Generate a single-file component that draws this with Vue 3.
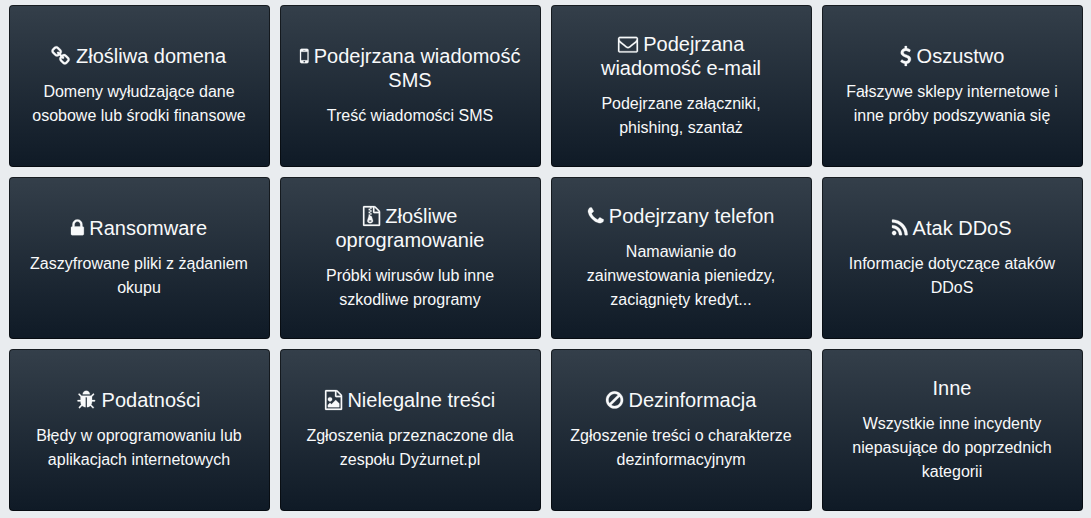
<template>
  <div class="grid">
    <a v-for="card in cards" :key="card.title" class="card" href="#">
      <div class="title">
        <svg
          v-if="card.icon"
          class="icon"
          :viewBox="`${icons[card.icon].x} 0 ${icons[card.icon].adv} 1792`"
          :style="{ width: (icons[card.icon].adv / 1792) * 20 + 'px' }"
        >
          <path :d="icons[card.icon].d" />
        </svg>
        {{ card.title }}
      </div>
      <p class="desc">{{ card.desc }}</p>
    </a>
  </div>
</template>

<script setup>
// Font Awesome 4 glyphs on the 1792 grid, x/adv crop each one to its advance width
const icons = {
  link: { x: 64, adv: 1664, d: 'M1456 1216q0-40-28-68l-208-208q-28-28-68-28-42 0-72 32 3 3 19 18.500t21.500 21.500 15 19 13 25.500 3.500 27.500q0 40-28 68t-68 28q-15 0-27.500-3.500t-25.500-13-19-15-21.500-21.500-18.500-19q-33 31-33 73 0 40 28 68l206 207q27 27 68 27 40 0 68-26l147-146q28-28 28-67zm-703-705q0-40-28-68l-206-207q-28-28-68-28-39 0-68 27l-147 146q-28 28-28 67 0 40 28 68l208 208q27 27 68 27 42 0 72-31-3-3-19-18.500t-21.500-21.500-15-19-13-25.500-3.500-27.500q0-40 28-68t68-28q15 0 27.500 3.500t25.500 13 19 15 21.500 21.500 18.500 19q33-31 33-73zm895 705q0 120-85 203l-147 146q-83 83-203 83-121 0-204-85l-206-207q-83-83-83-203 0-123 88-209l-88-88q-86 88-208 88-120 0-204-84l-208-208q-84-84-84-204t85-203l147-146q83-83 203-83 121 0 204 85l206 207q83 83 83 203 0 123-88 209l88 88q86-88 208-88 120 0 204 84l208 208q84 84 84 204z' },
  mobile: { x: 512, adv: 768, d: 'M976 1408q0-33-23.500-56.500t-56.500-23.500-56.500 23.500-23.500 56.500 23.500 56.500 56.500 23.500 56.500-23.500 23.500-56.500zm208-160v-704q0-13-9.500-22.500t-22.500-9.500h-512q-13 0-22.500 9.500t-9.500 22.500v704q0 13 9.500 22.500t22.500 9.500h512q13 0 22.500-9.500t9.500-22.500zm-192-848q0-16-16-16h-160q-16 0-16 16t16 16h160q16 0 16-16zm288-16v1024q0 52-38 90t-90 38h-512q-52 0-90-38t-38-90v-1024q0-52 38-90t90-38h512q52 0 90 38t38 90z' },
  envelope: { x: 0, adv: 1792, d: 'M1664 1504v-768q-32 36-69 66-268 206-426 338-51 43-83 67t-86.500 48.500-102.500 24.500h-2q-48 0-102.500-24.500t-86.500-48.500-83-67q-158-132-426-338-37-30-69-66v768q0 13 9.500 22.500t22.500 9.500h1472q13 0 22.500-9.500t9.500-22.500zm0-1051v-24.500l-.5-13-3-12.500-5.500-9-9-7.500-14-2.500h-1472q-13 0-22.500 9.500t-9.500 22.500q0 168 147 284 193 152 401 317 6 5 35 29.500t46 37.500 44.500 31.500 50.500 27.500 43 9h2q20 0 43-9t50.500-27.500 44.500-31.500 46-37.500 35-29.500q208-165 401-317 54-43 100.500-115.500t46.500-131.500zm128-37v1088q0 66-47 113t-113 47h-1472q-66 0-113-47t-47-113v-1088q0-66 47-113t113-47h1472q66 0 113 47t47 113z' },
  dollar: { x: 384, adv: 1024, d: 'M1362 1185q0 153-99.500 263.500t-258.500 136.500v175q0 14-9 23t-23 9h-135q-13 0-22.500-9.500t-9.500-22.500v-175q-66-9-127.500-31t-101.500-44.500-74-48-46.500-37.500-17.500-18q-17-21-2-41l103-135q7-10 23-12 15-2 24 9l2 2q113 99 243 125 37 8 74 8 81 0 142.500-43t61.500-122q0-28-15-53t-33.500-42-58.500-37.500-66-32-80-32.500q-39-16-61.500-25t-61.500-26.500-62.500-31-56.500-35.500-53.500-42.500-43.500-49-35.500-58-21-66.500-8.500-78q0-138 98-242t255-134v-180q0-13 9.500-22.500t22.500-9.500h135q14 0 23 9t9 23v176q57 6 110.500 23t87 33.500 63.500 37.500 39 29 15 14q17 18 5 38l-81 146q-8 15-23 16-14 3-27-7-3-3-14.500-12t-39-26.500-58.500-32-74.500-26-85.500-11.500q-95 0-155 43t-60 111q0 26 8.500 48t29.500 41.500 39.500 33 56 31 60.500 27 70 27.500q53 20 81 31.500t76 35 75.500 42.500 62 50 53 63.500 31.500 76.500 13 94z' },
  lock: { x: 320, adv: 1152, d: 'M640 768h512v-192q0-106-75-181t-181-75-181 75-75 181v192zm832 96v576q0 40-28 68t-68 28h-960q-40 0-68-28t-28-68v-576q0-40 28-68t68-28h32v-192q0-184 132-316t316-132 316 132 132 316v192h32q40 0 68 28t28 68z' },
  fileArchive: { x: 128, adv: 1536, d: 'M768 384v-128h-128v128h128zm128 128v-128h-128v128h128zm-128 128v-128h-128v128h128zm128 128v-128h-128v128h128zm700-388q28 28 48 76t20 88v1152q0 40-28 68t-68 28h-1344q-40 0-68-28t-28-68v-1600q0-40 28-68t68-28h896q40 0 88 20t76 48zm-444-244v376h376q-10-29-22-41l-313-313q-12-12-41-22zm384 1528v-1024h-416q-40 0-68-28t-28-68v-416h-128v128h-128v-128h-512v1536h1280zm-627-721l107 349q8 27 8 52 0 83-72.500 137.500t-183.500 54.500-183.500-54.500-72.500-137.500q0-25 8-52 21-63 120-396v-128h128v128h79q22 0 39 13t23 34zm-141 465q53 0 90.500-19t37.500-45-37.500-45-90.500-19-90.500 19-37.500 45 37.500 45 90.500 19z' },
  phone: { x: 192, adv: 1408, d: 'M1600 1240q0 27-10 70.500t-21 68.500q-21 50-122 106-94 51-186 51-27 0-53-3.500t-57.500-12.500-47-14.500-55.500-20.500-49-18q-98-35-175-83-127-79-264-216t-216-264q-48-77-83-175-3-9-18-49t-20.500-55.500-14.500-47-12.500-57.500-3.500-53q0-92 51-186 56-101 106-122 25-11 68.500-21t70.500-10q14 0 21 3 18 6 53 76 11 19 30 54t35 63.500 31 53.500q3 4 17.500 25t21.500 35.500 7 28.500q0 20-28.500 50t-62 55-62 53-28.500 46q0 9 5 22.500t8.500 20.500 14 24 11.500 19q76 137 174 235t235 174q2 1 19 11.500t24 14 20.500 8.500 22.500 5q18 0 46-28.500t53-62 55-62 50-28.500q14 0 28.500 7t35.500 21.500 25 17.500q25 15 53.500 31t63.500 35 54 30q70 35 76 53 3 7 3 21z' },
  rss: { x: 192, adv: 1408, d: 'M576 1344q0 80-56 136t-136 56-136-56-56-136 56-136 136-56 136 56 56 136zm512 123q2 28-17 48-18 21-47 21h-135q-25 0-43-16.500t-20-41.500q-22-229-184.500-391.500t-391.500-184.500q-25-2-41.500-20t-16.500-43v-135q0-29 21-47 17-17 43-17h5q160 13 306 80.500t259 181.500q114 113 181.500 259t80.500 306zm512 2q2 27-18 47-18 20-46 20h-143q-26 0-44.500-17.500t-19.500-42.500q-12-215-101-408.500t-231.500-336-336-231.500-408.500-102q-25-1-42.500-19.500t-17.500-43.500v-143q0-28 20-46 18-18 44-18h3q262 13 501.500 120t425.500 294q187 186 294 425.500t120 501.500z' },
  bug: { x: 64, adv: 1664, d: 'M1696 960q0 26-19 45t-45 19h-224q0 171-67 290l208 209q19 19 19 45t-19 45q-18 19-45 19t-45-19l-198-197q-5 5-15 13t-42 28.500-65 36.500-82 29-97 13v-896h-128v896q-51 0-101.500-13.500t-87-33-66-39-43.500-32.500l-15-14-183 207q-20 21-48 21-24 0-43-16-19-18-20.500-44.500t15.500-46.500l202-227q-58-114-58-274h-224q-26 0-45-19t-19-45 19-45 45-19h224v-294l-173-173q-19-19-19-45t19-45 45-19 45 19l173 173h844l173-173q19-19 45-19t45 19 19 45-19 45l-173 173v294h224q26 0 45 19t19 45zm-480-576h-640q0-133 93.500-226.500t226.500-93.500 226.500 93.500 93.500 226.500z' },
  fileImage: { x: 128, adv: 1536, d: 'M1596 380q28 28 48 76t20 88v1152q0 40-28 68t-68 28h-1344q-40 0-68-28t-28-68v-1600q0-40 28-68t68-28h896q40 0 88 20t76 48zm-444-244v376h376q-10-29-22-41l-313-313q-12-12-41-22zm384 1528v-1024h-416q-40 0-68-28t-28-68v-416h-768v1536h1280zm-128-448v320h-1024v-192l192-192 128 128 384-384zm-832-192q-80 0-136-56t-56-136 56-136 136-56 136 56 56 136-56 136-136 56z' },
  ban: { x: 128, adv: 1536, d: 'M1440 893q0-161-87-295l-754 753q137 89 297 89 111 0 211.500-43.500t173.500-116.500 116-174.500 43-212.500zm-999 299l755-754q-135-91-300-91-148 0-273 73t-198 199-73 274q0 162 89 299zm1223-299q0 157-61 300t-163.500 246-245 164-298.500 61-298.500-61-245-164-163.500-246-61-300 61-299.500 163.500-245.500 245-164 298.500-61 298.500 61 245 164 163.500 245.500 61 299.500z' }
}

const cards = [
  { icon: 'link', title: 'Złośliwa domena', desc: 'Domeny wyłudzające dane osobowe lub środki finansowe' },
  { icon: 'mobile', title: 'Podejrzana wiadomość SMS', desc: 'Treść wiadomości SMS' },
  { icon: 'envelope', title: 'Podejrzana wiadomość e-mail', desc: 'Podejrzane załączniki, phishing, szantaż' },
  { icon: 'dollar', title: 'Oszustwo', desc: 'Fałszywe sklepy internetowe i inne próby podszywania się' },
  { icon: 'lock', title: 'Ransomware', desc: 'Zaszyfrowane pliki z żądaniem okupu' },
  { icon: 'fileArchive', title: 'Złośliwe oprogramowanie', desc: 'Próbki wirusów lub inne szkodliwe programy' },
  { icon: 'phone', title: 'Podejrzany telefon', desc: 'Namawianie do zainwestowania pieniedzy, zaciągnięty kredyt...' },
  { icon: 'rss', title: 'Atak DDoS', desc: 'Informacje dotyczące ataków DDoS' },
  { icon: 'bug', title: 'Podatności', desc: 'Błędy w oprogramowaniu lub aplikacjach internetowych' },
  { icon: 'fileImage', title: 'Nielegalne treści', desc: 'Zgłoszenia przeznaczone dla zespołu Dyżurnet.pl' },
  { icon: 'ban', title: 'Dezinformacja', desc: 'Zgłoszenie treści o charakterze dezinformacyjnym' },
  { icon: null, title: 'Inne', desc: 'Wszystkie inne incydenty niepasujące do poprzednich kategorii' }
]
</script>

<style>
body {
  background: #e9ecef;
}
</style>

<style scoped>
.grid {
  display: grid;
  grid-template-columns: repeat(4, 261px);
  grid-auto-rows: 162px;
  gap: 10px;
  padding: 5px 8px 0 8.5px;
  font-family: "Liberation Sans", Arial, sans-serif;
}

.card {
  display: flex;
  flex-direction: column;
  justify-content: center;
  align-items: center;
  box-sizing: border-box;
  padding: 0 17px;
  border: 1px solid rgba(0, 0, 0, 0.55);
  border-radius: 4px;
  background: linear-gradient(to bottom, #343f4a, #0f1a26) border-box;
  color: #f8f9fa;
  text-align: center;
  text-decoration: none;
}

.title {
  font-size: 20px;
  line-height: 24px;
  margin-bottom: 12px;
}

.icon {
  display: inline-block;
  height: 20px;
  vertical-align: -2.86px;
  overflow: visible;
  fill: currentColor;
  stroke: currentColor;
  stroke-width: 22;
}

.desc {
  margin: 0;
  font-size: 16px;
  line-height: 24px;
}
</style>
